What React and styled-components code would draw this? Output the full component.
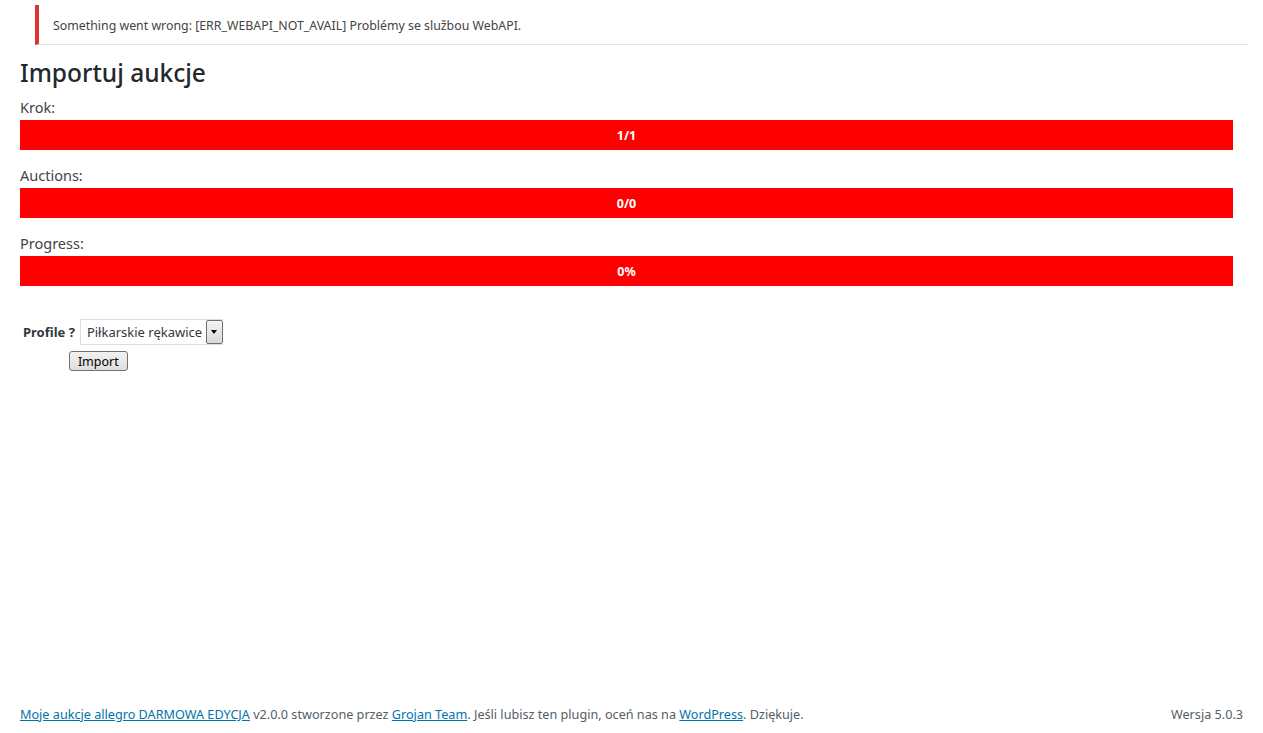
import React from "react";
import styled, { createGlobalStyle } from "styled-components";

const GlobalStyle = createGlobalStyle`
    html, body {
        margin: 0;
        padding: 0;
        background: #fff;
    }
    body {
        font-family: "Noto Sans", "Open Sans", sans-serif;
        font-size: 13px;
        color: #444;
    }
`;

const Page = styled.div`
    display: flex;
    flex-direction: column;
    min-height: 733px;
    box-sizing: border-box;
`;

const Content = styled.div`
    padding: 0 30px 0 20px;
`;

const Notice = styled.div`
    margin: 5px 15px 0 35px;
    border-left: 4px solid #dc3232;
    border-bottom: 1px solid #e5e5e5;
    padding: 12px 14px 10px 14px;
    font-size: 12.35px;
    line-height: 17px;
    color: #444;
`;

const Title = styled.h1`
    margin: 12px 0 0 0;
    font-size: 24.5px;
    font-weight: 500;
    line-height: 32px;
    color: #23282d;
`;

const Label = styled.div`
    font-size: 14.5px;
    line-height: 26px;
    color: #444;
    margin-top: ${(p) => (p.first ? "5px" : "12px")};
`;

const Bar = styled.div`
    height: 30px;
    background: #ff0000;
    color: #fff;
    font-weight: 700;
    font-size: 12.5px;
    display: flex;
    align-items: center;
    justify-content: center;
`;

const Form = styled.div`
    margin-top: 33px;
    display: grid;
    grid-template-columns: auto auto;
    justify-content: start;
    align-items: center;
    row-gap: 6px;
    column-gap: 5px;
    padding-left: 3px;
`;

const FieldLabel = styled.label`
    font-weight: 700;
    color: #32373c;
`;

const SelectBox = styled.div`
    display: flex;
    align-items: stretch;
    height: 26px;
    width: 143px;
    box-sizing: border-box;
    border: 1px solid #ddd;
    border-right: none;
    background: #fff;
`;

const SelectText = styled.span`
    flex: 1;
    padding-left: 6px;
    display: flex;
    align-items: center;
    color: #32373c;
`;

const ArrowBtn = styled.span`
    width: 15px;
    border: 1px solid #707070;
    border-radius: 2px;
    background: linear-gradient(#f4f4f4, #d8d8d8);
    display: flex;
    align-items: center;
    justify-content: center;
`;

const Arrow = styled.span`
    width: 0;
    height: 0;
    border-left: 3.5px solid transparent;
    border-right: 3.5px solid transparent;
    border-top: 4px solid #000;
`;

const Button = styled.button`
    grid-column: 2;
    justify-self: start;
    margin-left: -11px;
    font-family: "Noto Sans", sans-serif;
    font-size: 12.5px;
    height: 20px;
    padding: 0 8px;
    border: 1px solid #707070;
    border-radius: 3px;
    background: linear-gradient(#f2f2f2, #dddddd);
    color: #000;
`;

const Footer = styled.div`
    margin-top: auto;
    padding: 0 20px 10px;
    display: flex;
    justify-content: space-between;
    color: #555d66;
    font-size: 12.65px;
    line-height: 17px;
`;

const Link = styled.a`
    color: #0073aa;
    text-decoration: underline;
`;

const bars = [
    { label: "Krok:", value: "1/1" },
    { label: "Auctions:", value: "0/0" },
    { label: "Progress:", value: "0%" },
];

export default function App() {
    return (
        <Page>
            <GlobalStyle />
            <Notice>
                Something went wrong: [ERR_WEBAPI_NOT_AVAIL] Problémy se službou WebAPI.
            </Notice>
            <Content>
                <Title>Importuj aukcje</Title>
                {bars.map((b, i) => (
                    <div key={b.label}>
                        <Label first={i === 0}>{b.label}</Label>
                        <Bar>{b.value}</Bar>
                    </div>
                ))}
                <Form>
                    <FieldLabel>Profile ?</FieldLabel>
                    <SelectBox>
                        <SelectText>Piłkarskie rękawice</SelectText>
                        <ArrowBtn>
                            <Arrow />
                        </ArrowBtn>
                    </SelectBox>
                    <Button>Import</Button>
                </Form>
            </Content>
            <Footer>
                <span>
                    <Link href="#">Moje aukcje allegro DARMOWA EDYCJA</Link> v2.0.0 stworzone przez{" "}
                    <Link href="#">Grojan Team</Link>. Jeśli lubisz ten plugin, oceń nas na{" "}
                    <Link href="#">WordPress</Link>. Dziękuje.
                </span>
                <span>Wersja 5.0.3</span>
            </Footer>
        </Page>
    );
}
